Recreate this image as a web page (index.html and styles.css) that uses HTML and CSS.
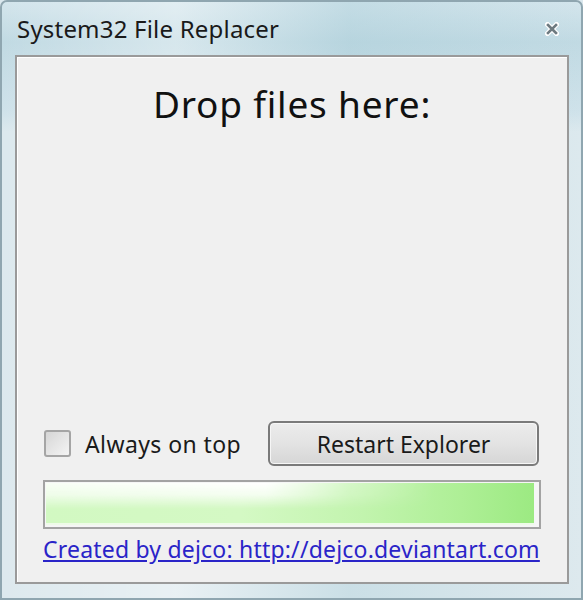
FILE: index.html
```html
<!DOCTYPE html>
<html>
<head>
<meta charset="utf-8">
<link rel="stylesheet" href="styles.css">
</head>
<body>
<div class="window">
  <div class="titlebar">
    <span class="title">System32 File Replacer</span>
    <svg class="close" width="14" height="14" viewBox="0 0 14 14">
      <path d="M2.5 2.5 L11.5 11.5 M11.5 2.5 L2.5 11.5" stroke="#ffffff" stroke-width="5" stroke-linecap="square"/>
      <path d="M3 3 L11 11 M11 3 L3 11" stroke="#6e7a80" stroke-width="2.6" stroke-linecap="square"/>
    </svg>
  </div>
  <div class="client">
    <h1 class="drop">Drop files here:</h1>
    <div class="spacer"></div>
    <div class="controls">
      <label class="check"><span class="box"></span><span>Always on top</span></label>
      <button class="btn">Restart Explorer</button>
    </div>
    <div class="progress"><div class="fill"></div></div>
    <a class="link" href="#">Created by dejco: http://dejco.deviantart.com</a>
  </div>
</div>
</body>
</html>
```
FILE: styles.css
```css
html, body { margin: 0; padding: 0; }
body { width: 583px; height: 600px; overflow: hidden; background: #dbe8ee; font-family: "Noto Sans", "Open Sans", sans-serif; }
.window {
  box-sizing: border-box;
  width: 583px; height: 600px;
  border: 2px solid #8fa6b0;
  border-radius: 7px 7px 0 0;
  background:
    linear-gradient(90deg, rgba(255,255,255,0) 0%, rgba(255,255,255,0.35) 30%, rgba(160,200,212,0.3) 60%, rgba(255,255,255,0) 100%),
    linear-gradient(180deg, #d3e5ec 0px, #c1dae3 40px, #cfe2ea 110px, #dce9ee 130px, #dde9ee 100%);
  display: flex; flex-direction: column;
}
.titlebar {
  height: 53px;
  display: flex; align-items: center; justify-content: space-between;
  padding: 0 22px 0 15px;
  box-sizing: border-box;
}
.title { font-size: 24px; line-height: 30px; color: #1a1a1a; letter-spacing: 0.2px; }
.client {
  box-sizing: border-box;
  margin: 0 12px 14px 13px;
  flex: 1;
  background: #f0f0f0;
  border: 2px solid #9a9a9a;
  box-shadow: inset 1px 1px 0 #ffffff;
  display: flex; flex-direction: column;
  padding: 0 26px 18px 26px;
}
.drop {
  margin: 23px 0 0 0;
  text-align: center;
  font-weight: normal;
  font-size: 37px;
  line-height: 48px;
  color: #111;
  letter-spacing: 0.8px;
}
.spacer { flex: 1; }
.controls { display: flex; align-items: center; justify-content: space-between; margin-left: 1px; margin-right: 2px; }
.check { display: flex; align-items: center; gap: 14px; font-size: 23px; color: #1a1a1a; letter-spacing: 0.4px; }
.box {
  width: 23px; height: 23px;
  border: 2px solid #a5a5a5;
  border-radius: 3px;
  background: linear-gradient(135deg, #d6d6d6, #f4f4f4);
}
.btn {
  width: 271px; height: 45px;
  border: 2px solid #7a7a7a;
  border-radius: 6px;
  background: linear-gradient(180deg, #ececec 0%, #e3e3e3 50%, #d6d6d6 100%);
  box-shadow: inset 0 0 0 1px #f6f6f6;
  font-family: "Noto Sans", "Open Sans", sans-serif;
  font-size: 23px; color: #1a1a1a;
  padding: 0;
}
.progress {
  margin-top: 14px;
  height: 49px;
  box-sizing: border-box;
  border: 2px solid #a3a3a3;
  background: #f6f6f6;
  padding: 1px 5px 2px 1px;
  display: flex;
}
.fill {
  flex: 1;
  position: relative;
  background: linear-gradient(90deg, #d2f9c2 0%, #d4f9c4 40%, #c2f4ae 65%, #aeef96 85%, #9cea82 100%);
  border-bottom: 2px solid #eefbe8;
}
.fill::after {
  content: "";
  position: absolute; inset: 0;
  background: linear-gradient(180deg, rgba(255,255,255,1) 0%, rgba(255,255,255,0.75) 30%, rgba(255,255,255,0) 65%);
  -webkit-mask-image: linear-gradient(90deg, rgba(0,0,0,0.85) 0%, #000 45%, rgba(0,0,0,0.3) 62%, rgba(0,0,0,0) 80%);
  mask-image: linear-gradient(90deg, rgba(0,0,0,0.85) 0%, #000 45%, rgba(0,0,0,0.3) 62%, rgba(0,0,0,0) 80%);
}
.link {
  margin-top: 5px;
  font-size: 23px;
  line-height: 30px;
  color: #2a24c8;
  text-decoration: underline;
  letter-spacing: 0.2px;
}
```
